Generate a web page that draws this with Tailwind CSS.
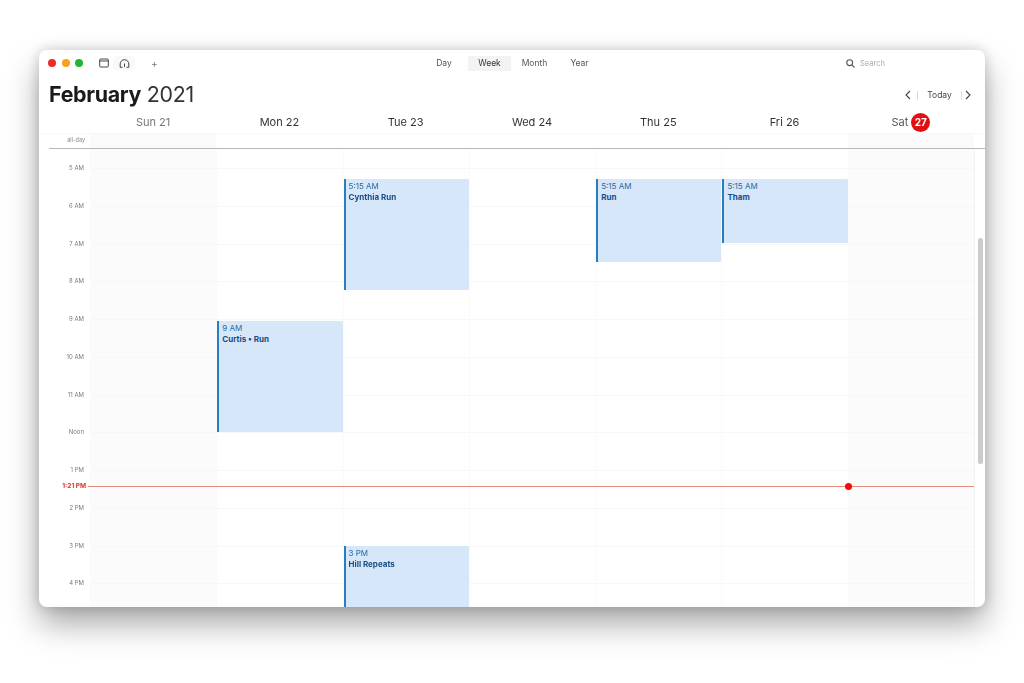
<!DOCTYPE html>
<html lang="en">
<head>
    <meta charset="UTF-8">
    <title>Calendar</title>
    <script src="https://cdn.jsdelivr.net/npm/@tailwindcss/browser@4"></script>
</head>
<body class="bg-white font-['Inter',sans-serif] overflow-hidden">
    <div class="w-[1024px] h-[683px] pt-[50px] pl-[39px]">
        <!-- Window -->
        <div class="w-[946px] h-[557px] bg-white rounded-lg overflow-hidden flex flex-col shadow-[0_17px_32px_rgba(0,0,0,0.34),0_0_14px_rgba(0,0,0,0.18)] blur-[0.6px]">
            <!-- Toolbar -->
            <div class="h-[26px] shrink-0 relative flex items-center pl-[9px] pr-[98px]">
                <div class="flex gap-[5.5px]">
                    <span class="w-2 h-2 rounded-full bg-[#ee2a24]"></span>
                    <span class="w-2 h-2 rounded-full bg-[#f7a21b]"></span>
                    <span class="w-2 h-2 rounded-full bg-[#22b531]"></span>
                </div>
                <svg class="w-[10px] h-[10px] ml-[16px] text-[#444]" viewBox="0 0 10 10" fill="none" stroke="currentColor"><rect x="0.7" y="1" width="8.6" height="8" rx="1"/><path d="M0.7 3h8.6" stroke-width="1.2"/></svg>
                <div class="ml-[4px] w-[22px] h-[14px] flex items-center justify-center bg-[#f9f9f9] rounded-sm">
                    <svg class="w-[11px] h-[11px] text-[#444]" viewBox="0 0 11 11" fill="none" stroke="currentColor"><path d="M1.2 9.3 V6 a4.3 4.3 0 0 1 8.6 0 V9.3 H7.5 M3.5 9.3 H1.2"/><path d="M5.5 9 V5.5"/></svg>
                </div>
                <span class="ml-[16px] text-[10px] leading-none text-[#777]">+</span>
                <div class="absolute left-[391px] top-[6px] flex items-center text-[8.5px] text-[#555] h-[15px]">
                    <span class="w-[28px] text-center">Day</span>
                    <span class="w-[43px] ml-[10px] h-[15px] flex items-center justify-center bg-[#f3f3f3] text-[#333]">Week</span>
                    <span class="w-[47px] text-center">Month</span>
                    <span class="w-[43px] text-center">Year</span>
                </div>
                <div class="flex items-center gap-[5px] w-[41px] text-[7.5px] text-[#aaa] absolute left-[807px] top-[8px]">
                    <svg class="w-[9px] h-[9px] shrink-0 text-[#555]" viewBox="0 0 9 9" fill="none" stroke="currentColor" stroke-width="1.1"><circle cx="3.7" cy="3.7" r="2.9"/><path d="M5.9 5.9 8.5 8.5"/></svg>
                    <span>Search</span>
                </div>
            </div>
            <!-- Title row -->
            <div class="h-[36px] shrink-0 flex items-center pl-[10px] pr-[14px] pt-[2px]">
                <h1 class="text-[21.4px] leading-none tracking-[-0.3px] text-[#1a1a1a]"><span class="font-bold">February</span> <span class="font-normal text-[#333]">2021</span></h1>
                <div class="ml-auto flex items-center text-[#444] h-[14px] text-[8.5px]">
                    <svg class="w-[6px] h-[10px]" viewBox="0 0 6 10" fill="none" stroke="currentColor" stroke-width="1.1"><path d="M5 1 1 5l4 4"/></svg>
                    <span class="w-px h-[9px] bg-[#ddd] ml-[6px]"></span>
                    <span class="w-[43px] text-center">Today</span>
                    <span class="w-px h-[9px] bg-[#ddd]"></span>
                    <svg class="w-[6px] h-[10px] ml-[3px]" viewBox="0 0 6 10" fill="none" stroke="currentColor" stroke-width="1.1"><path d="M1 1l4 4-4 4"/></svg>
                </div>
            </div>
            <!-- Day headings -->
            <div class="h-[21px] shrink-0 grid grid-cols-[51px_repeat(7,1fr)_11px] items-center text-[11px] text-[#333]">
                <span></span>
                <span class="text-center text-[#777]">Sun 21</span>
                <span class="text-center">Mon 22</span>
                <span class="text-center">Tue 23</span>
                <span class="text-center">Wed 24</span>
                <span class="text-center">Thu 25</span>
                <span class="text-center">Fri 26</span>
                <span class="flex items-center justify-center gap-[3px] text-[#555]">Sat <span class="w-[19px] h-[19px] rounded-full bg-[#e10f0f] text-white font-bold text-[10px] flex items-center justify-center">27</span></span>
            </div>
            <!-- All-day row -->
            <div class="h-[15px] shrink-0 grid grid-cols-[51px_repeat(7,1fr)_11px] border-t border-[#f8f8f8]">
                <span class="text-[5.5px] text-[#888] text-right pr-[5px] leading-[13px]">all-day</span>
                <span class="bg-[#fafafa]"></span>
                <span class="col-span-5"></span>
                <span class="bg-[#fafafa]"></span>
            </div>
            <div class="h-[1px] shrink-0 ml-[10px] bg-[#bdb6b6]"></div>
            <!-- Scrolling hours -->
            <div id="hoursGrid" class="flex-1 relative grid grid-cols-[51px_repeat(7,1fr)_11px] overflow-hidden">
            </div>
        </div>
    </div>

    <script>
        const HOUR_HEIGHT = 37.75;
        const GRID_TOP = 149; // page y where the scrolling area begins

        const hours = ['5 AM', '6 AM', '7 AM', '8 AM', '9 AM', '10 AM', '11 AM', 'Noon', '1 PM', '2 PM', '3 PM', '4 PM'];

        // day index, page y from and to
        const events = [
            { day: 2, from: 179, to: 290, time: '5:15 AM', title: 'Cynthia Run' },
            { day: 4, from: 179, to: 262, time: '5:15 AM', title: 'Run' },
            { day: 5, from: 179, to: 243, time: '5:15 AM', title: 'Tham' },
            { day: 1, from: 321, to: 432, time: '9 AM', title: 'Curtis • Run' },
            { day: 2, from: 546, to: 612, time: '3 PM', title: 'Hill Repeats' }
        ];

        const hourLines = hours.map((h, i) => `
            <div class="absolute left-0 right-0 h-px bg-[#f8f7f7]" style="top:${19 + i * HOUR_HEIGHT}px"></div>
        `).join('');

        const labels = hours.map((h, i) => `
            <span class="absolute right-[6px] text-[6px] leading-[8px] text-[#7a7a7a]" style="top:${15 + i * HOUR_HEIGHT}px">${h}</span>
        `).join('');

        const dayColumn = (day) => {
            const weekend = day === 0 || day === 6;
            const items = events.filter(e => e.day === day).map(e => `
                <div class="absolute left-0 right-0 bg-[#d5e7f8] border-l-2 border-[#2c7dbd] rounded-r-[1px] pl-[3px] pt-[2px] text-[8px] leading-[11px]" style="top:${e.from - GRID_TOP}px;height:${e.to - e.from}px">
                    <div class="text-[#2a6aa6]">${e.time}</div>
                    <div class="font-bold text-[#1b4c85]">${e.title}</div>
                </div>
            `).join('');
            return `<div class="relative border-l border-[#fafafa] ${weekend ? 'bg-[#fbfbfb]' : ''}">${hourLines}${items}</div>`;
        };

        document.getElementById('hoursGrid').innerHTML = `
            <div class="relative">${labels}</div>
            ${[0, 1, 2, 3, 4, 5, 6].map(dayColumn).join('')}
            <div class="relative border-l border-[#f2f2f2]">
                <div class="absolute left-[3px] w-[5px] h-[226px] top-[89px] rounded-full bg-[#cbcbcb]"></div>
            </div>
            <span class="absolute left-0 w-[47px] text-right text-[6.5px] font-bold leading-[8px] text-[#d8362a] top-[333px]">1:21 PM</span>
            <div class="absolute left-[49px] w-[886px] h-px bg-[#e58d7a] top-[337px]"></div>
            <div class="absolute left-[806px] w-[7px] h-[7px] rounded-full bg-[#ee0c0c] top-[334px]"></div>
        `;
    </script>
</body>
</html>
